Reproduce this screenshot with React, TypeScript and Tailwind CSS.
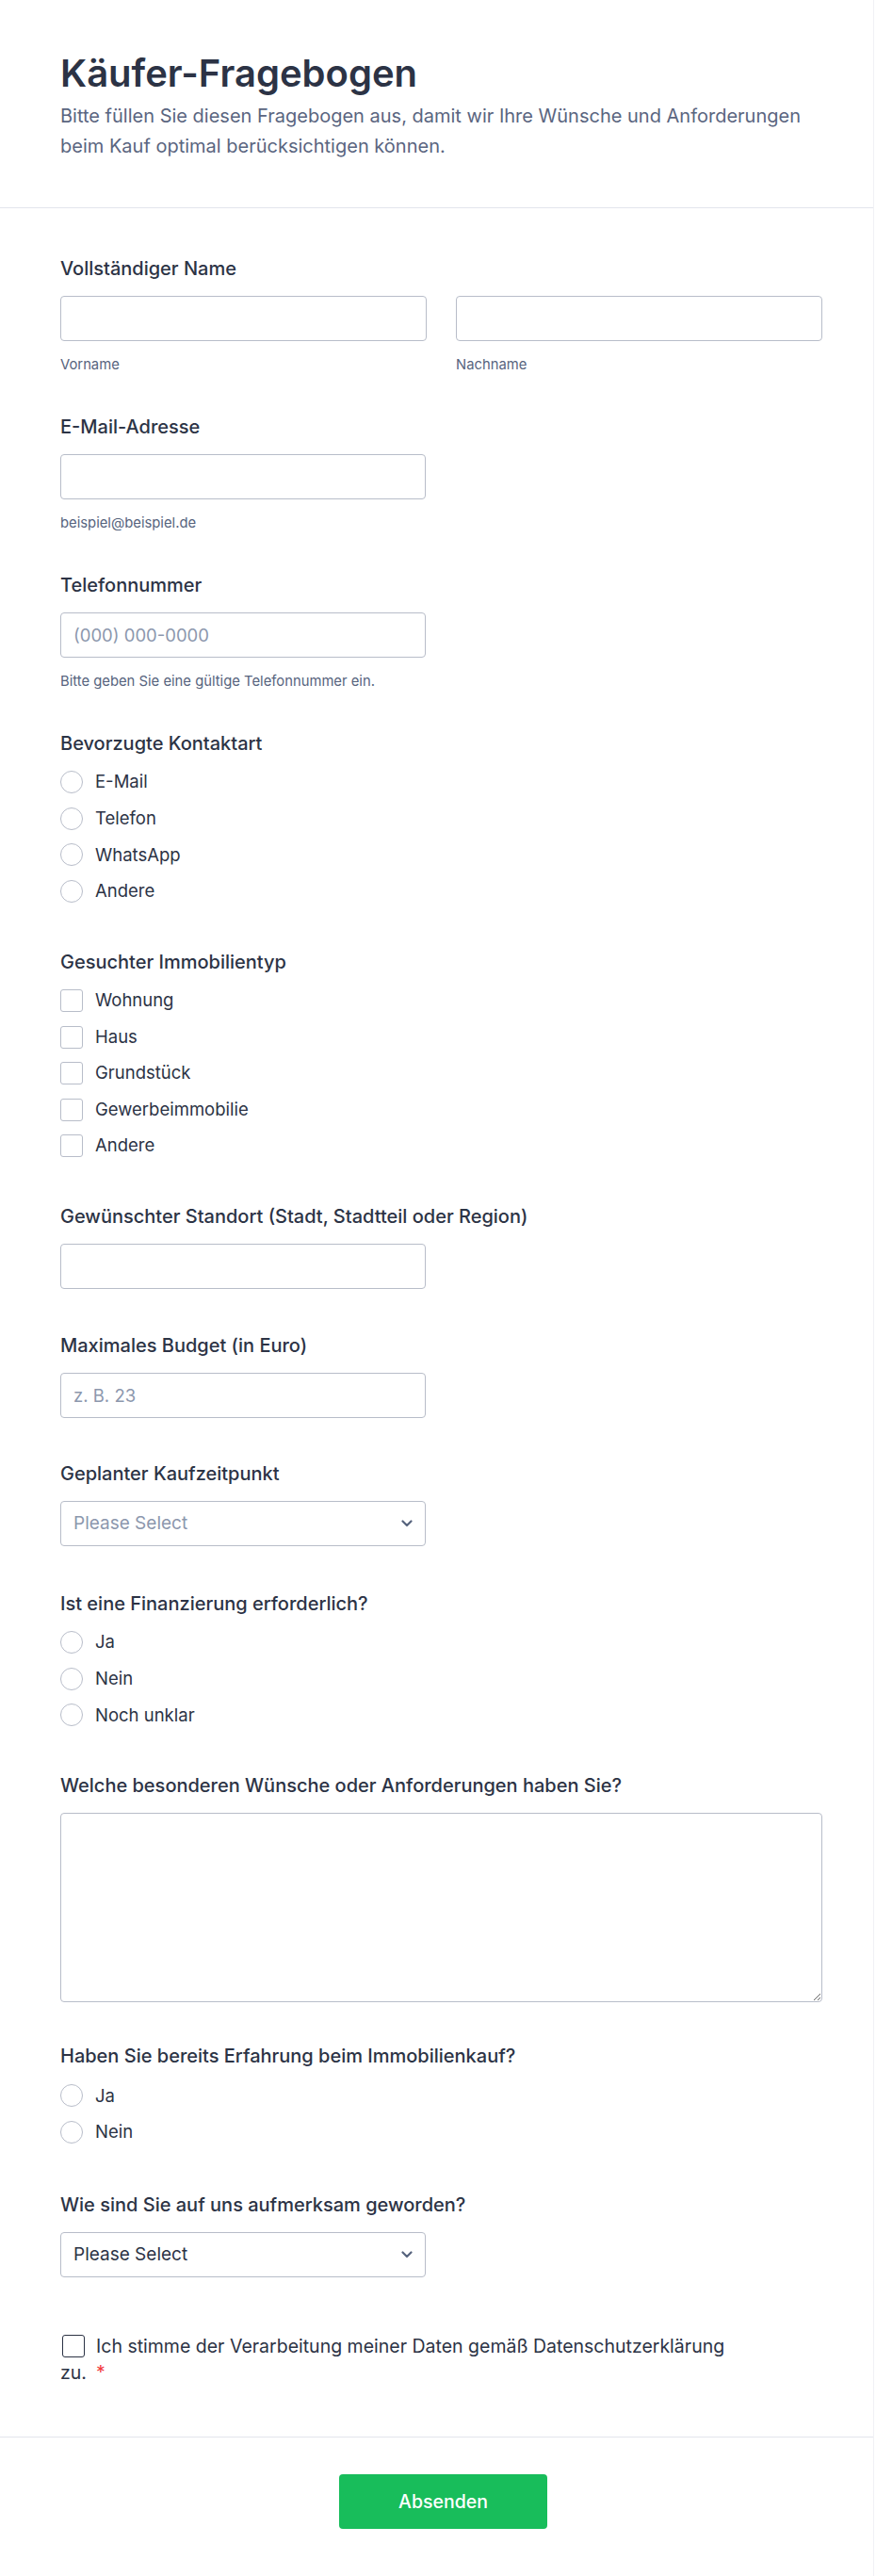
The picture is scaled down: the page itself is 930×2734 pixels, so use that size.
import React from "react";

const Label = ({ children }: { children: React.ReactNode }) => (
  <div className="text-[20px] leading-6 font-medium text-[#2c3345]">{children}</div>
);

const Hint = ({ children }: { children: React.ReactNode }) => (
  <div className="mt-[16px] text-[14.8px] leading-[18px] text-[#57647e]">{children}</div>
);

const TextInput = ({ placeholder, wide }: { placeholder?: string; wide?: boolean }) => (
  <input
    type="text"
    placeholder={placeholder}
    className={`${wide ? "w-full" : "w-[388px]"} h-12 rounded-[4px] border border-[#b8bdc9] bg-white px-[13px] text-[18.5px] text-[#2c3345] outline-none placeholder:text-[#8c97ad]`}
  />
);

const Radio = ({ label }: { label: string }) => (
  <div className="flex h-6 items-center gap-[13px]">
    <span className="size-6 shrink-0 rounded-full border border-[#b8bdc9] bg-white" />
    <span className="text-[18.5px] text-[#2c3345]">{label}</span>
  </div>
);

const Check = ({ label }: { label: string }) => (
  <div className="flex h-6 items-center gap-[13px]">
    <span className="size-6 shrink-0 rounded-[3px] border border-[#b8bdc9] bg-white" />
    <span className="text-[18.5px] text-[#2c3345]">{label}</span>
  </div>
);

const Select = ({ dark }: { dark?: boolean }) => (
  <div className="flex h-12 w-[388px] items-center justify-between rounded-[4px] border border-[#b8bdc9] bg-white pl-[13px] pr-[13px]">
    <span className={`text-[19px] ${dark ? "text-[#2c3345]" : "text-[#8c97ad]"}`}>Please Select</span>
    <svg width="12" height="8" viewBox="0 0 12 8" fill="none">
      <path d="M1.5 1.5L6 6L10.5 1.5" stroke="#57647e" strokeWidth="2.2" strokeLinecap="round" strokeLinejoin="round" />
    </svg>
  </div>
);

export default function App() {
  return (
    <div className="min-h-screen bg-white font-[Inter,'Noto_Sans',sans-serif]">
      <div className="w-[928px] border-r border-[#f0f1f5]">
        <header className="border-b border-[#e3e5ec] px-16 pt-[54px] pb-[49px]">
          <h1 className="text-[40px] leading-[48px] font-semibold text-[#2c3345]">Käufer-Fragebogen</h1>
          <p className="mt-[5px] max-w-[800px] text-[20px] leading-[32px] text-[#5a6580]">
            Bitte füllen Sie diesen Fragebogen aus, damit wir Ihre Wünsche und Anforderungen beim Kauf optimal berücksichtigen können.
          </p>
        </header>

        <main className="flex flex-col gap-[45px] pt-[52px] pr-[54px] pb-[54px] pl-16">
          <div>
            <Label>Vollständiger Name</Label>
            <div className="mt-[17px] grid grid-cols-2 gap-[31px]">
              <div>
                <TextInput wide />
                <Hint>Vorname</Hint>
              </div>
              <div>
                <TextInput wide />
                <Hint>Nachname</Hint>
              </div>
            </div>
          </div>

          <div>
            <Label>E-Mail-Adresse</Label>
            <div className="mt-[17px]">
              <TextInput />
            </div>
            <Hint>beispiel@beispiel.de</Hint>
          </div>

          <div>
            <Label>Telefonnummer</Label>
            <div className="mt-[17px]">
              <TextInput placeholder="(000) 000-0000" />
            </div>
            <Hint>Bitte geben Sie eine gültige Telefonnummer ein.</Hint>
          </div>

          <div className="pb-[6px]">
            <Label>Bevorzugte Kontaktart</Label>
            <div className="mt-[17px] flex flex-col gap-[14.7px]">
              <Radio label="E-Mail" />
              <Radio label="Telefon" />
              <Radio label="WhatsApp" />
              <Radio label="Andere" />
            </div>
          </div>

          <div className="pb-[6px]">
            <Label>Gesuchter Immobilientyp</Label>
            <div className="mt-[17px] flex flex-col gap-[14.5px]">
              <Check label="Wohnung" />
              <Check label="Haus" />
              <Check label="Grundstück" />
              <Check label="Gewerbeimmobilie" />
              <Check label="Andere" />
            </div>
          </div>

          <div>
            <Label>Gewünschter Standort (Stadt, Stadtteil oder Region)</Label>
            <div className="mt-[17px]">
              <TextInput />
            </div>
          </div>

          <div className="mt-[3px]">
            <Label>Maximales Budget (in Euro)</Label>
            <div className="mt-[17px]">
              <TextInput placeholder="z. B. 23" />
            </div>
          </div>

          <div className="mt-[2px]">
            <Label>Geplanter Kaufzeitpunkt</Label>
            <div className="mt-[17px]">
              <Select />
            </div>
          </div>

          <div className="mt-[4px] pb-[6px]">
            <Label>Ist eine Finanzierung erforderlich?</Label>
            <div className="mt-[17px] flex flex-col gap-[14.7px]">
              <Radio label="Ja" />
              <Radio label="Nein" />
              <Radio label="Noch unklar" />
            </div>
          </div>

          <div>
            <Label>Welche besonderen Wünsche oder Anforderungen haben Sie?</Label>
            <textarea className="mt-[17px] block h-[201px] w-full resize-y rounded-[4px] border border-[#b8bdc9] bg-white outline-none" />
          </div>

          <div className="pb-[6px]">
            <Label>Haben Sie bereits Erfahrung beim Immobilienkauf?</Label>
            <div className="mt-[18px] flex flex-col gap-[14.7px]">
              <Radio label="Ja" />
              <Radio label="Nein" />
            </div>
          </div>

          <div className="mt-[2px]">
            <Label>Wie sind Sie auf uns aufmerksam geworden?</Label>
            <div className="mt-[17px]">
              <Select dark />
            </div>
          </div>

          <div className="mt-[14px] max-w-[725px] text-[19.5px] leading-[28px] text-[#2c3345]">
            <span className="mr-[12px] ml-[2px] inline-block size-6 rounded-[3px] border border-[#2c3345] bg-white align-[-5px]" />
            <span>
              Ich stimme der Verarbeitung meiner Daten gemäß Datenschutzerklärung zu.
              <span className="ml-[10px] text-[#f23a3c]">*</span>
            </span>
          </div>
        </main>

        <footer className="flex justify-center border-t border-[#e3e5ec] pt-[39px] pb-[50px] pl-[14px]">
          <button className="h-[58px] w-[221px] rounded-[4px] bg-[#18bd5b] text-[19.5px] font-medium text-white">
            Absenden
          </button>
        </footer>
      </div>
    </div>
  );
}
